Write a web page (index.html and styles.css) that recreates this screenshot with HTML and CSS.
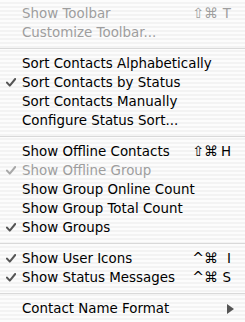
FILE: index.html
```html
<!DOCTYPE html>
<html lang="en">
<head>
  <meta charset="UTF-8" />
  <title>View Menu</title>
  <link rel="stylesheet" href="styles.css">
</head>
<body>
  <div class="menu">
    <div class="item disabled">
      <span class="check"></span>
      <span class="label">Show Toolbar</span>
      <span class="keys"><span class="mods">⇧⌘</span><span class="key">T</span></span>
    </div>
    <div class="item disabled">
      <span class="check"></span>
      <span class="label">Customize Toolbar...</span>
    </div>

    <div class="sep"></div>

    <div class="item">
      <span class="check"></span>
      <span class="label">Sort Contacts Alphabetically</span>
    </div>
    <div class="item checked">
      <span class="check"><svg viewBox="0 0 10 9"><path d="M1 4.6 L3.8 7.6 L9.2 1"/></svg></span>
      <span class="label">Sort Contacts by Status</span>
    </div>
    <div class="item">
      <span class="check"></span>
      <span class="label">Sort Contacts Manually</span>
    </div>
    <div class="item">
      <span class="check"></span>
      <span class="label">Configure Status Sort...</span>
    </div>

    <div class="sep"></div>

    <div class="item">
      <span class="check"></span>
      <span class="label">Show Offline Contacts</span>
      <span class="keys"><span class="mods">⇧⌘</span><span class="key">H</span></span>
    </div>
    <div class="item disabled checked">
      <span class="check"><svg viewBox="0 0 10 9"><path d="M1 4.6 L3.8 7.6 L9.2 1"/></svg></span>
      <span class="label">Show Offline Group</span>
    </div>
    <div class="item">
      <span class="check"></span>
      <span class="label">Show Group Online Count</span>
    </div>
    <div class="item">
      <span class="check"></span>
      <span class="label">Show Group Total Count</span>
    </div>
    <div class="item checked">
      <span class="check"><svg viewBox="0 0 10 9"><path d="M1 4.6 L3.8 7.6 L9.2 1"/></svg></span>
      <span class="label">Show Groups</span>
    </div>

    <div class="sep"></div>

    <div class="item checked">
      <span class="check"><svg viewBox="0 0 10 9"><path d="M1 4.6 L3.8 7.6 L9.2 1"/></svg></span>
      <span class="label">Show User Icons</span>
      <span class="keys"><span class="mods">^⌘</span><span class="key">I</span></span>
    </div>
    <div class="item checked">
      <span class="check"><svg viewBox="0 0 10 9"><path d="M1 4.6 L3.8 7.6 L9.2 1"/></svg></span>
      <span class="label">Show Status Messages</span>
      <span class="keys"><span class="mods">^⌘</span><span class="key">S</span></span>
    </div>

    <div class="sep"></div>

    <div class="item">
      <span class="check"></span>
      <span class="label">Contact Name Format</span>
      <span class="arrow"></span>
    </div>
  </div>
</body>
</html>
```

FILE: styles.css
```css
* {
  margin: 0;
  padding: 0;
  box-sizing: border-box;
}

body {
  width: 245px;
  height: 322px;
  overflow: hidden;
  font-family: 'DejaVu Sans', 'Liberation Sans', sans-serif;
  font-size: 13.4px;
  color: #000;
  background: #fafafa;
}

.menu {
  width: 245px;
  height: 322px;
  padding: 4px 0;
  display: flex;
  flex-direction: column;
  background: repeating-linear-gradient(
    to bottom,
    #fcfcfc 0,
    #fcfcfc 2px,
    #f3f3f3 2px,
    #f3f3f3 4px
  );
}

.item {
  height: 19px;
  display: grid;
  grid-template-columns: 22px 1fr auto;
  align-items: center;
  padding-right: 14px;
  line-height: 19px;
  white-space: nowrap;
}

.item.disabled {
  color: #9e9e9e;
}

.check {
  display: flex;
  justify-content: flex-start;
  padding-left: 6px;
}

.check svg {
  width: 10px;
  height: 9px;
  fill: none;
  stroke: #555;
  stroke-width: 2;
  stroke-linecap: round;
  stroke-linejoin: round;
}

.disabled .check svg {
  stroke: #a8a8a8;
}

.keys {
  display: flex;
  align-items: center;
}

.mods {
  font-size: 14px;
  text-align: right;
}

.key {
  width: 13px;
  text-align: right;
}

.arrow {
  width: 0;
  height: 0;
  margin-right: -3px;
  border-top: 5px solid transparent;
  border-bottom: 5px solid transparent;
  border-left: 7px solid #555;
}

.sep {
  height: 12px;
  display: flex;
  align-items: center;
}

.sep::after {
  content: '';
  display: block;
  width: 100%;
  height: 1px;
  background: #d9d9d9;
}
```
